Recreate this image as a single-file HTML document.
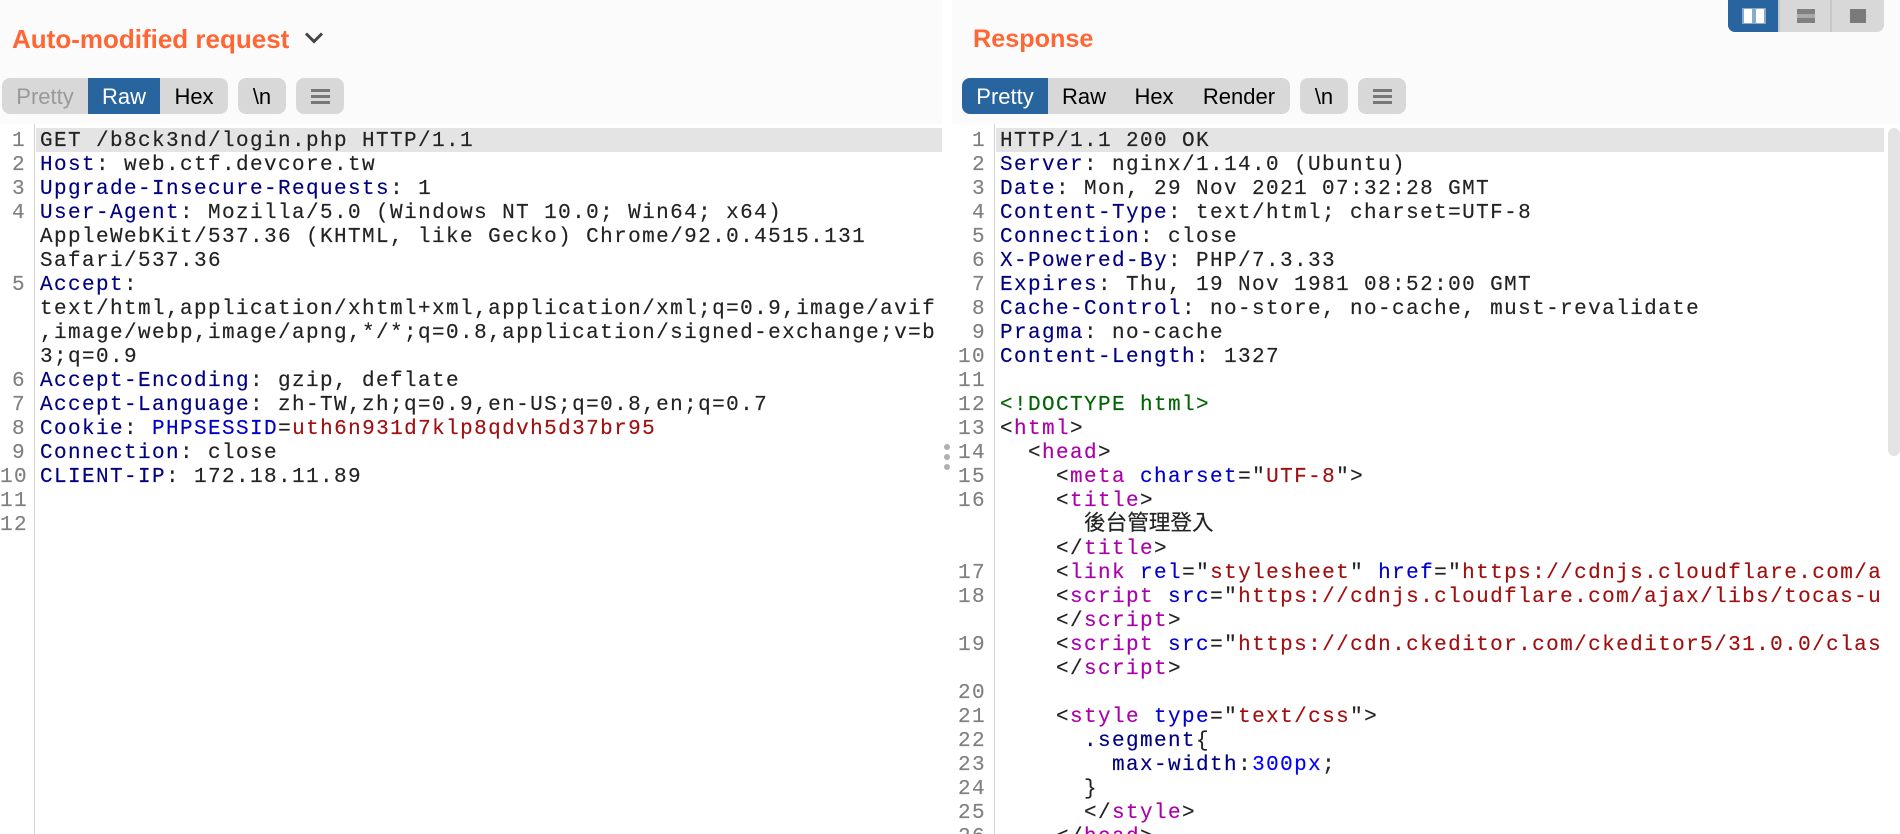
<!DOCTYPE html>
<html><head><meta charset="utf-8"><title>Repeater</title>
<style>
html,body{margin:0;padding:0;background:#fff;width:1900px;height:834px;overflow:hidden}
body{position:relative;font-family:"Liberation Sans",Arial,sans-serif}
.a{position:absolute}
.bar{top:0;height:124px;background:#fbfbfb}
.t{top:24px;font-size:26px;line-height:30px;font-weight:bold;color:#ff6633;white-space:nowrap}
.grp{top:78px;height:36px;background:#d8d8d8;border-radius:8px;overflow:hidden}
.b{position:absolute;top:78px;height:36px;line-height:38px;font-size:22px;color:#000;text-align:center;white-space:nowrap}
.on{background:#28659f;color:#fff;line-height:38px}
pre{position:absolute;margin:0;font-family:"Liberation Mono",monospace;font-size:21px;letter-spacing:1.4px;line-height:24px;overflow:hidden;color:#222;font-kerning:none;-webkit-text-stroke:0.15px currentColor}
.n{color:#808080;text-align:right}
.k{color:#000080}.r{color:#a00f0f}.m{color:#aa00aa}.c{color:#0000cc}.g{color:#006400}.u{color:#0000ff}
.cjk{font-family:"Liberation Sans","Noto Sans CJK TC",sans-serif;font-size:21.6px;letter-spacing:0;line-height:0}
.hl{top:128px;height:24px;background:#e4e4e4}
.gut{top:124px;width:1px;height:710px;background:#d2d2d2}
.dot{width:6px;height:6px;border-radius:3px;background:#b0b0b0}
.i{background:#777}
</style></head><body>
<div class="a bar" style="left:0;width:942px"></div>
<div class="a bar" style="left:952px;width:948px"></div>

<div class="a t" style="left:12px">Auto-modified request</div>
<svg class="a" style="left:304px;top:31px" width="20" height="14" viewBox="0 0 20 14"><path d="M2 2.5 L10 10.5 L18 2.5" fill="none" stroke="#444" stroke-width="3"/></svg>
<div class="a t" style="left:973px;font-size:25.2px">Response</div>

<!-- left tabs -->
<div class="a grp" style="left:2px;width:226px"></div>
<div class="b" style="left:2px;width:86px;color:#999">Pretty</div>
<div class="b on" style="left:88px;width:72px">Raw</div>
<div class="b" style="left:160px;width:68px">Hex</div>
<div class="a grp" style="left:238px;width:48px"></div>
<div class="b" style="left:238px;width:48px">\n</div>
<div class="a grp" style="left:296px;width:48px"></div>
<div class="a i" style="left:311px;top:89px;width:19px;height:3px"></div>
<div class="a i" style="left:311px;top:95px;width:19px;height:3px"></div>
<div class="a i" style="left:311px;top:101px;width:19px;height:3px"></div>

<!-- right tabs -->
<div class="a grp" style="left:962px;width:328px"></div>
<div class="b on" style="left:962px;width:86px;border-radius:8px 0 0 8px">Pretty</div>
<div class="b" style="left:1048px;width:72px">Raw</div>
<div class="b" style="left:1120px;width:68px">Hex</div>
<div class="b" style="left:1188px;width:102px">Render</div>
<div class="a grp" style="left:1300px;width:48px"></div>
<div class="b" style="left:1300px;width:48px">\n</div>
<div class="a grp" style="left:1358px;width:48px"></div>
<div class="a i" style="left:1373px;top:89px;width:19px;height:3px"></div>
<div class="a i" style="left:1373px;top:95px;width:19px;height:3px"></div>
<div class="a i" style="left:1373px;top:101px;width:19px;height:3px"></div>

<!-- layout toggle -->
<div class="a" style="left:1728px;top:0;width:156px;height:32px;background:#d8d8d8;border-radius:0 0 7px 7px;overflow:hidden">
<div class="a" style="left:0;top:0;width:50px;height:32px;background:#28659f"></div>
<div class="a" style="left:50px;top:0;width:2px;height:32px;background:#c8c8c8"></div>
<div class="a" style="left:102px;top:0;width:2px;height:32px;background:#c8c8c8"></div>
<div class="a" style="left:14px;top:8px;width:24px;height:16px;background:#fff;opacity:.45"></div>
<div class="a" style="left:16px;top:9px;width:8px;height:14px;background:#fff"></div>
<div class="a" style="left:28px;top:9px;width:8px;height:14px;background:#fff"></div>
<div class="a" style="left:69px;top:9px;width:18px;height:5px;background:#808080"></div>
<div class="a" style="left:69px;top:14px;width:18px;height:4px;background:#aaa"></div>
<div class="a" style="left:69px;top:18px;width:18px;height:5px;background:#808080"></div>
<div class="a" style="left:122px;top:9px;width:16px;height:14px;background:#7a7a7a"></div>
</div>

<!-- left editor -->
<div class="a hl" style="left:36px;width:906px"></div>
<div class="a gut" style="left:34px"></div>
<pre class="n" style="left:0;top:130px;width:26px;height:704px">1
2
3
4


5



6
7
8
9
10
11
12</pre>
<pre style="left:40px;top:130px;width:902px;height:704px">GET /b8ck3nd/login.php HTTP/1.1
<span class="k">Host</span>: web.ctf.devcore.tw
<span class="k">Upgrade-Insecure-Requests</span>: 1
<span class="k">User-Agent</span>: Mozilla/5.0 (Windows NT 10.0; Win64; x64)
AppleWebKit/537.36 (KHTML, like Gecko) Chrome/92.0.4515.131
Safari/537.36
<span class="k">Accept</span>:
text/html,application/xhtml+xml,application/xml;q=0.9,image/avif
,image/webp,image/apng,*/*;q=0.8,application/signed-exchange;v=b
3;q=0.9
<span class="k">Accept-Encoding</span>: gzip, deflate
<span class="k">Accept-Language</span>: zh-TW,zh;q=0.9,en-US;q=0.8,en;q=0.7
<span class="k">Cookie</span>: <span class="c">PHPSESSID</span>=<span class="r">uth6n931d7klp8qdvh5d37br95</span>
<span class="k">Connection</span>: close
<span class="k">CLIENT-IP</span>: 172.18.11.89</pre>

<!-- divider dots -->
<div class="a dot" style="left:944px;top:444px"></div>
<div class="a dot" style="left:944px;top:454px"></div>
<div class="a dot" style="left:944px;top:464px"></div>

<!-- right editor -->
<div class="a hl" style="left:996px;width:888px"></div>
<div class="a gut" style="left:994px"></div>
<pre class="n" style="left:952px;top:130px;width:34px;height:704px">1
2
3
4
5
6
7
8
9
10
11
12
13
14
15
16


17
18

19

20
21
22
23
24
25
26</pre>
<pre style="left:1000px;top:130px;width:883px;height:704px">HTTP/1.1 200 OK
<span class="k">Server</span>: nginx/1.14.0 (Ubuntu)
<span class="k">Date</span>: Mon, 29 Nov 2021 07:32:28 GMT
<span class="k">Content-Type</span>: text/html; charset=UTF-8
<span class="k">Connection</span>: close
<span class="k">X-Powered-By</span>: PHP/7.3.33
<span class="k">Expires</span>: Thu, 19 Nov 1981 08:52:00 GMT
<span class="k">Cache-Control</span>: no-store, no-cache, must-revalidate
<span class="k">Pragma</span>: no-cache
<span class="k">Content-Length</span>: 1327

<span class="g">&lt;!DOCTYPE html&gt;</span>
&lt;<span class="m">html</span>&gt;
  &lt;<span class="m">head</span>&gt;
    &lt;<span class="m">meta</span> <span class="c">charset</span>="<span class="r">UTF-8</span>"&gt;
    &lt;<span class="m">title</span>&gt;
      <span class="cjk">後台管理登入</span>
    &lt;/<span class="m">title</span>&gt;
    &lt;<span class="m">link</span> <span class="c">rel</span>="<span class="r">stylesheet</span>" <span class="c">href</span>="<span class="r">https://cdnjs.cloudflare.com/a</span>
    &lt;<span class="m">script</span> <span class="c">src</span>="<span class="r">https://cdnjs.cloudflare.com/ajax/libs/tocas-ui/2.3.3/tocas.js</span>"&gt;
    &lt;/<span class="m">script</span>&gt;
    &lt;<span class="m">script</span> <span class="c">src</span>="<span class="r">https://cdn.ckeditor.com/ckeditor5/31.0.0/classic/ckeditor.js</span>"&gt;
    &lt;/<span class="m">script</span>&gt;

    &lt;<span class="m">style</span> <span class="c">type</span>="<span class="r">text/css</span>"&gt;
      <span class="k">.segment</span>{
        <span class="k">max-width</span>:<span class="u">300px</span>;
      }
      &lt;/<span class="m">style</span>&gt;
    &lt;/<span class="m">head</span>&gt;</pre>

<!-- scrollbar -->
<div class="a" style="left:1888px;top:128px;width:12px;height:328px;background:#e4e4e4;border-radius:6px 6px 6px 6px"></div>
</body></html>
